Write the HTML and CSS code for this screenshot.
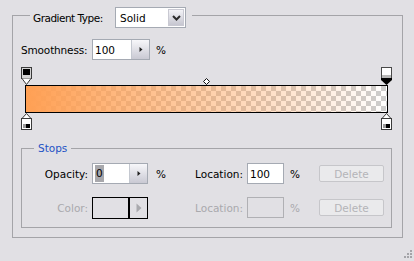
FILE: index.html
```html
<!DOCTYPE html>
<html>
<head>
<meta charset="utf-8">
<link rel="stylesheet" href="styles.css">
</head>
<body>
<div class="panel">
  <fieldset class="outer">
    <legend class="outer-legend">
      <span class="type-lbl">Gradient Type:</span>
      <span class="select">
        <span class="select-value">Solid</span>
        <span class="select-btn"><svg width="9" height="6" viewBox="0 0 9 6"><path d="M1 1 L4.5 4.5 L8 1" fill="none" stroke="#2b2b2b" stroke-width="2"/></svg></span>
      </span>
    </legend>

    <div class="smooth-row">
      <span class="smooth-lbl">Smoothness:</span>
      <span class="spin-field smooth-field">
        <span class="spin-value">100</span>
        <span class="spin-btn"><svg width="4" height="7" viewBox="0 0 4 7"><path d="M0.5 1 L3.5 3.5 L0.5 6 Z" fill="#222"/></svg></span>
      </span>
      <span class="pct">%</span>
    </div>

    <div class="editor">
      <div class="track top-track">
        <svg class="stop" style="left:0%" width="11" height="18" viewBox="0 0 11 18">
          <rect x="0.5" y="0.5" width="10" height="11" fill="#d4d4d4" stroke="#3a3a3a"/>
          <rect x="2" y="2" width="7" height="6" fill="#000"/>
          <path d="M1 11.5 L5.5 17.5 L10 11.5" fill="#fff" stroke="#3a3a3a"/>
        </svg>
        <svg class="midpoint" style="left:50%" width="7" height="7" viewBox="0 0 7 7">
          <path d="M3.5 0.5 L6.5 3.5 L3.5 6.5 L0.5 3.5 Z" fill="#fff" stroke="#111"/>
        </svg>
        <svg class="stop" style="left:100%" width="11" height="18" viewBox="0 0 11 18">
          <rect x="0.5" y="0.5" width="10" height="11" fill="#fff" stroke="#4a4a4a"/>
          <rect x="1" y="8" width="9" height="3" fill="#b8b8b8"/>
          <path d="M0 11 L11 11 L11 13 L5.5 18 L0 13 Z" fill="#000"/>
        </svg>
      </div>
      <div class="bar"><div class="bar-fill"></div></div>
      <div class="track bottom-track">
        <svg class="stop" style="left:0%" width="11" height="17" viewBox="0 0 11 17">
          <path d="M5.5 0.5 L10 5.5 L1 5.5 Z" fill="#fff" stroke="#3a3a3a"/>
          <rect x="0.5" y="5.5" width="10" height="11" fill="#fff" stroke="#3a3a3a"/>
          <rect x="2" y="11" width="3" height="4" fill="#9a9a9a"/>
          <rect x="5" y="11" width="4" height="4" fill="#000"/>
        </svg>
        <svg class="stop" style="left:100%" width="11" height="17" viewBox="0 0 11 17">
          <path d="M5.5 0.5 L10 5.5 L1 5.5 Z" fill="#fff" stroke="#3a3a3a"/>
          <rect x="0.5" y="5.5" width="10" height="11" fill="#fff" stroke="#3a3a3a"/>
          <rect x="2" y="11" width="3" height="4" fill="#9a9a9a"/>
          <rect x="5" y="11" width="4" height="4" fill="#000"/>
        </svg>
      </div>
    </div>

    <fieldset class="stops">
      <legend class="stops-legend">Stops</legend>
      <div class="stop-row">
        <span class="row-lbl">Opacity:</span>
        <span class="spin-field opacity-field">
          <span class="spin-value"><span class="sel">0</span></span>
          <span class="spin-btn"><svg width="4" height="7" viewBox="0 0 4 7"><path d="M0.5 1 L3.5 3.5 L0.5 6 Z" fill="#222"/></svg></span>
        </span>
        <span class="pct">%</span>
        <span class="loc-lbl">Location:</span>
        <span class="loc-field">100</span>
        <span class="pct2">%</span>
        <span class="btn">Delete</span>
      </div>
      <div class="stop-row disabled">
        <span class="row-lbl">Color:</span>
        <span class="swatch">
          <span class="swatch-color"></span>
          <span class="swatch-btn"><svg width="6" height="10" viewBox="0 0 6 10"><path d="M0.5 0.5 L5.5 5 L0.5 9.5 Z" fill="#a9a9ad"/></svg></span>
        </span>
        <span class="pct pct-hidden"></span>
        <span class="loc-lbl">Location:</span>
        <span class="loc-field"></span>
        <span class="pct2">%</span>
        <span class="btn">Delete</span>
      </div>
    </fieldset>
  </fieldset>
  <div class="grip-row">
    <svg class="grip" width="9" height="10" viewBox="0 0 9 10">
      <rect x="6" y="1" width="2" height="2" fill="#a4a4a8"/>
      <rect x="3" y="4" width="2" height="2" fill="#a4a4a8"/>
      <rect x="6" y="4" width="2" height="2" fill="#a4a4a8"/>
      <rect x="0" y="7" width="2" height="2" fill="#a4a4a8"/>
      <rect x="3" y="7" width="2" height="2" fill="#a4a4a8"/>
      <rect x="6" y="7" width="2" height="2" fill="#a4a4a8"/>
    </svg>
  </div>
</div>
</body>
</html>
```

FILE: styles.css
```css
* { box-sizing: border-box; }

body {
  margin: 0;
  background: #e1e0e4;
  font-family: "DejaVu Sans", "Liberation Sans", sans-serif;
  font-size: 10.5px;
  color: #000;
}

.panel {
  padding-top: 3px;
  display: flex;
  flex-direction: column;
}

.outer {
  margin: 0 11px 0 12px;
  border: 1px solid #a4a4a8;
  padding: 0 10px 9px 8px;
  min-width: 0;
}

.outer-legend {
  margin-left: 9px;
  padding: 4px 6px 0 3px;
  display: flex;
  align-items: center;
}

.type-lbl {
  width: 82px;
  letter-spacing: -0.5px;
  white-space: nowrap;
}

.select {
  width: 71px;
  height: 21px;
  border: 1px solid #a5aab3;
  background: #fff;
  display: flex;
  align-items: stretch;
}

.select-value {
  flex: 1;
  padding-left: 4px;
  display: flex;
  align-items: center;
}

.select-btn {
  width: 16px;
  margin: 1px;
  background: linear-gradient(#f3f3f7, #c6c6d0);
  border: 1px solid #c9c9d2;
  display: flex;
  align-items: center;
  justify-content: center;
}

.smooth-row {
  margin-top: 11px;
  height: 21px;
  display: flex;
  align-items: center;
}

.smooth-lbl {
  width: 71px;
  letter-spacing: -0.15px;
}

.spin-field {
  height: 21px;
  border: 1px solid #a5aab3;
  background: #fff;
  display: flex;
}

.smooth-field { width: 58px; }
.opacity-field { width: 56px; }

.spin-value {
  flex: 1;
  padding-left: 2px;
  display: flex;
  align-items: center;
}

.sel {
  background: #a8a8ac;
  padding: 2px 1px;
  line-height: 13px;
}

.spin-btn {
  width: 18px;
  border-left: 1px solid #c4c8d0;
  background: linear-gradient(#f7f7fa, #c9c9d3);
  display: flex;
  align-items: center;
  justify-content: center;
}

.pct {
  margin-left: 6px;
  width: 10px;
}

.smooth-row .pct { margin-left: 6px; }

.editor {
  margin-top: 7px;
  display: flex;
  flex-direction: column;
}

.track {
  position: relative;
  margin: 0 6px 0 5px;
}

.top-track { height: 18px; }
.bottom-track { height: 17px; }

.stop {
  position: absolute;
  top: 0;
  margin-left: -5px;
  display: block;
}

.midpoint {
  position: absolute;
  top: 11px;
  margin-left: -3px;
  display: block;
}

.bar {
  margin: 0 4px;
  height: 28px;
  border: 1px solid #000;
  background-color: #fff;
  background-image:
    linear-gradient(45deg, #cdcdcd 25%, transparent 25%, transparent 75%, #cdcdcd 75%),
    linear-gradient(45deg, #cdcdcd 25%, transparent 25%, transparent 75%, #cdcdcd 75%);
  background-size: 10px 10px;
  background-position: 0 0, 5px 5px;
}

.bar-fill {
  height: 100%;
  background: linear-gradient(to right, rgba(255, 160, 84, 1), rgba(255, 160, 84, 0));
}

.stops {
  margin: 11px 0 0 0;
  border: 1px solid #a4a4a8;
  padding: 7px 0 9px 0;
  min-width: 0;
  display: flex;
  flex-direction: column;
  gap: 13px;
}

.stops-legend {
  margin-left: 12px;
  padding: 0 4px;
  line-height: 15px;
  color: #2352c4;
}

.stop-row {
  height: 21px;
  display: flex;
  align-items: center;
}

.row-lbl {
  width: 70px;
  padding-right: 4px;
  text-align: right;
}

.pct { margin-left: 8px; }

.loc-lbl {
  width: 81px;
  padding-right: 4px;
  text-align: right;
}

.loc-field {
  width: 37px;
  height: 21px;
  border: 1px solid #a5aab3;
  background: #fff;
  padding-left: 2px;
  display: flex;
  align-items: center;
}

.pct2 {
  margin-left: 6px;
  width: 10px;
}

.btn {
  margin-left: 19px;
  width: 65px;
  height: 17px;
  border: 1px solid #c6c6ca;
  border-radius: 2px;
  background: #eaeaec;
  color: #b4b4b8;
  display: flex;
  align-items: center;
  justify-content: center;
}

.disabled .row-lbl,
.disabled .loc-lbl,
.disabled .pct2 {
  color: #a9a9ad;
}

.disabled .loc-field {
  background: transparent;
  border-color: #b0b0b4;
}

.swatch {
  width: 56px;
  height: 22px;
  border: 1px solid #000;
  display: flex;
}

.swatch-color {
  flex: 1;
  border-right: 2px solid #000;
}

.swatch-btn {
  width: 17px;
  display: flex;
  align-items: center;
  justify-content: center;
}

.grip-row {
  margin-top: 11px;
  display: flex;
  justify-content: flex-end;
  padding-right: 1px;
}

.grip { display: block; }
```
